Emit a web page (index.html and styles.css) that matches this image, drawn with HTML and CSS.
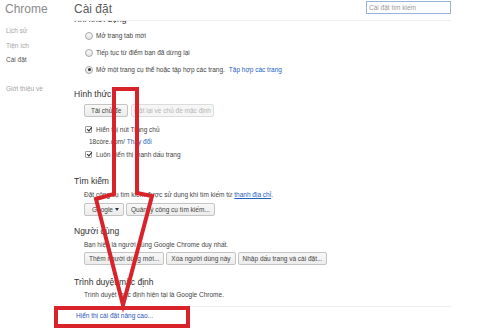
FILE: index.html
```html
<!DOCTYPE html>
<html lang="vi">
  <head>
    <meta charset="UTF-8" />
    <title>Cài đặt</title>
    <link rel="stylesheet" href="styles.css">
  </head>
  <body>
    <div class="page">
      <aside class="sidebar">
        <div class="brand">Chrome</div>
        <nav class="nav">
          <a href="#">Lịch sử</a>
          <a href="#">Tiện ích</a>
          <a href="#" class="active">Cài đặt</a>
          <a href="#" class="about">Giới thiệu về</a>
        </nav>
      </aside>
      <div class="main">
        <header class="header">
          <h1 class="title">Cài đặt</h1>
          <input class="search" type="text" placeholder="Cài đặt tìm kiếm" />
        </header>
        <div class="content">
          <section class="section startup">
            <h3 class="section-title first">Khi khởi động</h3>
            <div class="options">
              <label class="row radio-row"><span class="radio"></span>Mở trang tab mới</label>
              <label class="row radio-row"><span class="radio"></span>Tiếp tục từ điểm bạn đã dừng lại</label>
              <label class="row radio-row"><span class="radio checked"></span>Mở một trang cụ thể hoặc tập hợp các trang.<a href="#" class="link">Tập hợp các trang</a></label>
            </div>
          </section>

          <section class="section appearance">
            <h3 class="section-title">Hình thức</h3>
            <div class="buttons">
              <button class="btn">Tải chủ đề</button>
              <button class="btn" disabled>Đặt lại về chủ đề mặc định</button>
            </div>
            <div class="checks">
              <label class="row check-row"><span class="checkbox"></span>Hiển thị nút Trang chủ</label>
              <div class="row home-url">18còre.com/ <a href="#" class="link">Thay đổi</a></div>
              <label class="row check-row"><span class="checkbox"></span>Luôn hiển thị thanh dấu trang</label>
            </div>
          </section>

          <section class="section search-engine">
            <h3 class="section-title">Tìm kiếm</h3>
            <p class="desc">Đặt công cụ tìm kiếm được sử dụng khi tìm kiếm từ <a href="#" class="link underline">thanh địa chỉ</a>.</p>
            <div class="buttons">
              <button class="btn select">Google <span class="caret"></span></button>
              <button class="btn">Quản lý công cụ tìm kiếm...</button>
            </div>
          </section>

          <section class="section users">
            <h3 class="section-title">Người dùng</h3>
            <p class="desc">Bạn hiện là người dùng Google Chrome duy nhất.</p>
            <div class="buttons">
              <button class="btn">Thêm người dùng mới...</button>
              <button class="btn">Xóa người dùng này</button>
              <button class="btn">Nhập dấu trang và cài đặt...</button>
            </div>
          </section>

          <section class="section default-browser">
            <h3 class="section-title">Trình duyệt mặc định</h3>
            <p class="desc">Trình duyệt mặc định hiện tại là Google Chrome.</p>
          </section>

          <div class="advanced">
            <a href="#" class="link">Hiển thị cài đặt nâng cao...</a>
          </div>
        </div>
      </div>
    </div>

    <!-- red annotation drawn over the screenshot -->
    <svg class="annotation" width="485" height="333" viewBox="0 0 485 333">
      <path d="M114 89 H137 V193 L152 196 L123 305 L96 199 L114 194 Z" fill="none" stroke="#d9232b" stroke-width="4" stroke-linejoin="miter" />
      <rect x="56" y="308" width="132" height="18" fill="none" stroke="#d9232b" stroke-width="4" />
    </svg>
  </body>
</html>
```

FILE: styles.css
```css
body {
  margin: 0;
  background: #fff;
  font-family: "Liberation Sans", Arial, sans-serif;
  color: #333;
  overflow: hidden;
}

a {
  text-decoration: none;
}

.page {
  display: flex;
  height: 333px;
}

.sidebar {
  width: 74px;
  flex-shrink: 0;
}

.brand {
  font-size: 12px;
  line-height: 16px;
  color: #8a8a8a;
  padding: 1px 0 0 5px;
}

.nav {
  display: flex;
  flex-direction: column;
  padding: 7px 0 0 6px;
}

.nav a {
  font-size: 6.5px;
  line-height: 14.5px;
  color: #a3a3a3;
}

.nav a.active {
  color: #555;
}

.nav a.about {
  margin-top: 14px;
}

.main {
  width: 377px;
  display: flex;
  flex-direction: column;
}

.header {
  height: 20px;
  border-bottom: 1px solid #eee;
  display: flex;
  justify-content: space-between;
  align-items: center;
  flex-shrink: 0;
  position: relative;
  z-index: 1;
  background: #fff;
}

.title {
  margin: 0;
  font-size: 12px;
  font-weight: normal;
  color: #5c5c5c;
  line-height: 16px;
  margin-top: -3px;
}

.search {
  width: 79px;
  height: 11px;
  margin: -5px 0 0 0;
  padding: 0 2px;
  border: 1px solid #97b4d8;
  font-family: inherit;
  font-size: 6.5px;
  color: #333;
  outline: none;
}

.search::placeholder {
  color: #999;
}

.content {
  flex: 1;
  overflow: hidden;
}

.section-title {
  margin: 0;
  font-size: 8.5px;
  font-weight: normal;
  line-height: 12px;
  color: #303030;
}

/* heading scrolled half under the header */
.section-title.first {
  margin-top: -8px;
}

.row {
  display: flex;
  align-items: center;
  font-size: 6.5px;
  color: #444;
}

.options {
  padding: 2px 0 0 11px;
}

.radio-row {
  height: 17px;
}

.radio {
  width: 6px;
  height: 6px;
  border: 1px solid #a9a9a9;
  border-radius: 50%;
  background: linear-gradient(#fafafa, #e4e4e4);
  margin-right: 3px;
  position: relative;
}

.radio.checked::after {
  content: "";
  position: absolute;
  left: 1.5px;
  top: 1.5px;
  width: 3px;
  height: 3px;
  border-radius: 50%;
  background: #333;
}

.link {
  color: #2461c0;
  margin-left: 4px;
}

.link.underline {
  margin-left: 0;
  text-decoration: underline;
}

.appearance {
  margin-top: 10px;
}

.buttons {
  display: flex;
  gap: 2px;
  padding-left: 10px;
}

.appearance .buttons {
  margin-top: 4px;
  gap: 3px;
}

.appearance .btn {
  padding: 0 6px;
}

.btn {
  height: 13px;
  padding: 0 4px;
  border: 1px solid #c4c4c4;
  border-radius: 2px;
  background: linear-gradient(#f8f8f8, #ececec);
  font-family: inherit;
  font-size: 6.5px;
  color: #444;
  line-height: 11px;
}

.appearance .btn:disabled {
  color: #b5b5b5;
  border-color: #dcdcdc;
  background: #f6f6f6;
  padding: 0 2px;
}

.btn.select {
  width: 40px;
  padding: 0 4px 0 7px;
  display: flex;
  align-items: center;
  justify-content: space-between;
}

.caret {
  width: 0;
  height: 0;
  border-left: 2.5px solid transparent;
  border-right: 2.5px solid transparent;
  border-top: 3px solid #333;
}

.checks {
  margin-top: 6px;
  padding-left: 11px;
}

.check-row,
.home-url {
  height: 12.5px;
}

.home-url {
  padding-left: 4px;
}

.home-url .link {
  margin-left: 2px;
}

.checkbox {
  width: 5px;
  height: 5px;
  border: 1px solid #999;
  border-radius: 1px;
  background: #fff;
  margin-right: 4px;
  position: relative;
}

.checkbox::after {
  content: "";
  position: absolute;
  left: 1.5px;
  top: -0.5px;
  width: 1.5px;
  height: 4px;
  border: solid #222;
  border-width: 0 1.2px 1.2px 0;
  transform: rotate(40deg);
}

.search-engine {
  margin-top: 14px;
}

.desc {
  margin: 3px 0 3px 10px;
  font-size: 6.5px;
  line-height: 10px;
  color: #444;
}

.users {
  margin-top: 9px;
}

.users .desc {
  margin-bottom: 2px;
}

.default-browser {
  margin-top: 11px;
}

.default-browser .desc {
  margin-bottom: 0;
  margin-top: 2px;
}

.advanced {
  margin-top: 6px;
  border-top: 1px solid #eee;
  padding: 3px 0 0 2px;
  font-size: 6.5px;
  line-height: 12px;
}

.advanced .link {
  margin-left: 0;
  color: #2b56b8;
}

.annotation {
  position: absolute;
  top: 0;
  left: 0;
  pointer-events: none;
}
```
